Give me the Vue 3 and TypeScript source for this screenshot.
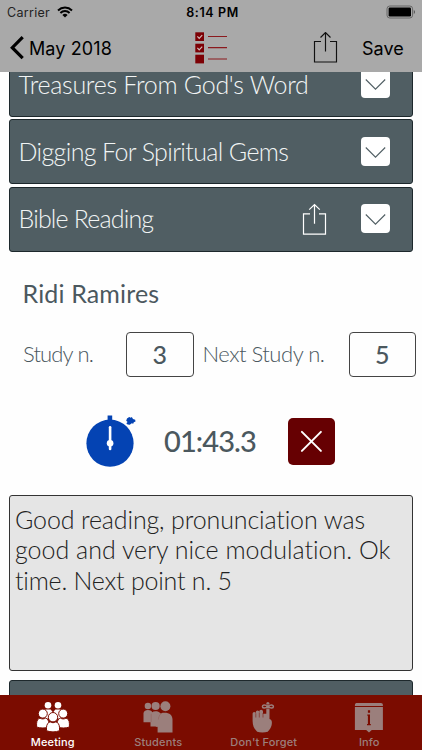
<script setup lang="ts">
interface Section {
  title: string
  cls: string
  share: boolean
}

const sections: Section[] = [
  { title: "Treasures From God's Word", cls: 'treasures', share: false },
  { title: 'Digging For Spiritual Gems', cls: 'gems', share: false },
  { title: 'Bible Reading', cls: 'reading', share: true },
]

const noteLines: string[] = [
  'Good reading, pronunciation was',
  'good and very nice modulation. Ok',
  'time. Next point n. 5',
]
</script>

<template>
  <div class="screen">
    <header class="top">
      <div class="status">
        <div class="carrier">
          <span>Carrier</span>
          <svg class="wifi" width="16" height="12" viewBox="0 0 16 12">
            <path d="M1 4.400a10.200 10.200 0 0 1 14 0M3.400 6.900a6.700 6.700 0 0 1 9.200 0" fill="none" stroke="#000" stroke-width="2" />
            <path d="M5.400 9a3.800 3.800 0 0 1 5.200 0L8 11.600z" />
          </svg>
        </div>
        <span class="clock">8:14 PM</span>
        <svg class="battery" width="30" height="14" viewBox="0 0 30 14">
          <rect x="1" y="1" width="25.600" height="12" rx="2.800" fill="none" stroke="#666" stroke-width="1" />
          <rect x="2.600" y="2.600" width="22.400" height="8.800" rx="1.200" />
          <path d="M27.800 5v4c1.600-.6 1.600-3.400 0-4z" fill="#555" />
        </svg>
      </div>
      <nav class="nav">
        <svg class="back" width="15" height="24" viewBox="0 0 15 24">
          <path d="M12.700 1.200 2.300 11.700l10.400 10.500" fill="none" stroke="#000" stroke-width="3.200" />
        </svg>
        <span class="back-label">May 2018</span>
        <svg class="checklist" width="34" height="33" viewBox="0 0 34 33">
          <g fill="#7d0005">
            <rect x="0.300" y="0.300" width="8.700" height="8.700" />
            <rect x="0.300" y="11.700" width="8.700" height="8.700" />
            <rect x="0.300" y="22.700" width="8.700" height="8.700" />
          </g>
          <path d="m2.400 4.400 1.800 2 3-3.200M2.400 15.800l1.800 2 3-3.200" fill="none" stroke="#d0bcbc" stroke-width="1.200" />
          <path d="M13 4.500h19M13 15.700h19M13 27h19" stroke="#8b1a1e" stroke-width="1.200" />
        </svg>
        <svg class="share" width="25" height="33" viewBox="0 0 25 33">
          <path d="M8 9.500H1.500v20.500h22V9.500H17M12.500 19.500V.7M7.500 5.500l5-5 5 5" fill="none" stroke="#111" stroke-width="1.150" />
        </svg>
        <span class="save">Save</span>
      </nav>
    </header>

    <main class="content">
      <div class="sections">
        <section v-for="s in sections" :key="s.title" class="card">
          <span class="card-title" :class="s.cls">{{ s.title }}</span>
          <svg v-if="s.share" class="card-share" width="25" height="33" viewBox="0 0 25 33">
            <path d="M8 10.900H1.500v20.300h22V10.900H17M12.500 20.700V1.500M7.200 6.600l5.300-5.100 5.300 5.100" fill="none" stroke="#fff" stroke-width="1.200" />
          </svg>
          <span class="toggle">
            <svg width="29" height="29" viewBox="0 0 29 29">
              <path d="m4.800 10.500 9.700 9.700 9.700-9.700" fill="none" stroke="#505e63" stroke-width="1.100" />
            </svg>
          </span>
        </section>
      </div>

      <h2 class="student">Ridi Ramires</h2>

      <div class="study">
        <span class="label current">Study n.</span>
        <span class="box">3</span>
        <span class="label next">Next Study n.</span>
        <span class="box">5</span>
      </div>

      <div class="timer">
        <svg class="stopwatch" width="50" height="53" viewBox="0 0 50 53">
          <g fill="#0443b3">
            <circle cx="24" cy="28.200" r="23.600" />
            <rect x="21.600" y="0.500" width="4.600" height="6" />
            <path d="m41 3.500 2.200-1.600 1.600.8 1-.6 1.200 1.800 2.200.8.300 1.800-1.700.8-.6 1.500-1.500-.5-1.900 1.400-2.200-.3-1.300-1.200 1.300-1.200-1.400-1.200z" />
          </g>
          <path d="M24.100 12.200V34" stroke="#fff" stroke-width="2.600" stroke-linecap="round" />
          <circle cx="24.100" cy="28.200" r="3.300" fill="#fff" />
        </svg>
        <span class="time">01:43.3</span>
        <span class="cancel">
          <svg width="47" height="47" viewBox="0 0 47 47">
            <path d="m13.900 13.900 19 19M32.900 13.900l-19 19" stroke="#fff" stroke-width="2" stroke-linecap="round" />
          </svg>
        </span>
      </div>

      <div class="note">
        <div v-for="(line, i) in noteLines" :key="line" class="line" :class="'line-' + i">{{ line }}</div>
      </div>
      <div class="card next-card"></div>
    </main>

    <footer class="tabs">
      <div class="tab active">
        <svg width="34" height="32" viewBox="0 0 34 32" fill="#fff">
          <circle cx="12" cy="4.300" r="3.300" /><circle cx="22" cy="4.300" r="3.300" />
          <path d="M9.300 8.500h5.400l2.300 3 2.300-3h5.400l.5 9H9z" />
          <g stroke="#7b0c00" stroke-width="1">
            <circle cx="6.800" cy="12.600" r="4.500" />
            <path d="M.6 26v-3.500c0-3 1.700-5 3.400-5.400 1.500 1.100 4 1.100 5.500 0 2 .5 3.400 2.400 3.400 5.400V26c-3 1.300-9 1.300-12.300 0z" />
            <circle cx="27.200" cy="12.600" r="4.500" />
            <path d="M21.100 26v-3.500c0-3 1.700-5 3.400-5.400 1.500 1.100 4 1.100 5.500 0 2 .5 3.400 2.400 3.400 5.400V26c-3 1.300-9 1.300-12.300 0z" />
            <circle cx="17" cy="16.200" r="4.700" />
            <path d="M10.500 29.700v-3.200c0-3 1.800-5.200 3.600-5.700 1.700 1.200 4.100 1.200 5.800 0 1.800.5 3.600 2.700 3.600 5.700v3.200c-3.500 1.600-9.500 1.600-13 0z" />
          </g>
        </svg>
        <span>Meeting</span>
      </div>
      <div class="tab students">
        <svg width="34" height="32" viewBox="0 0 34 32" fill="#9b7f7c">
          <circle cx="6.900" cy="5" r="3.200" />
          <path d="M2.500 21.300V12.500C2.500 10.200 4.300 9 6.900 9s4 1 4.500 2.500v9.800z" />
          <circle cx="14.600" cy="5" r="4.100" />
          <path d="M9.500 25.500V14.800c0-3 2-4.600 5.100-4.600s5.600 2 5.600 4.600v10.700z" />
          <circle cx="24.400" cy="5.200" r="5" />
          <path d="M16.600 31.500v-5.700h-1.800V18.200c0-4 3.800-6.400 8.700-6.400 5.200 0 8 2.700 8 6.700v13z" />
          <path d="M10.200 21V12.800M17.400 18.500c.3-3.500 1.700-5.600 3.800-6.700" fill="none" stroke="#7b0c00" stroke-opacity=".3" stroke-width=".5" />
        </svg>
        <span>Students</span>
      </div>
      <div class="tab forget">
        <svg width="34" height="32" viewBox="0 0 34 32">
          <path d="M5.600 20v-7.400a1.600 1.600 0 0 1 3.200 0v-1.400a1.750 1.750 0 0 1 3.500 0v-.7a1.850 1.850 0 0 1 3.700 0v2.200h3.300V2.600a1.600 1.600 0 0 1 3.200 0V18c1.700.5 2.400 1.700 2.400 3.500 0 5-2.500 7.300-4.200 9.200-3 1-7.700 1-10.500 0-2.400-2.200-4.600-5.200-4.600-10.700z" fill="#9b7f7c" />
          <path d="M8.800 12.300v4.200M12.300 11.500v5M16 12v4.500" stroke="#7b0c00" stroke-width=".5" />
          <path d="M20.900 5.500c-3-2.500-5.500-1.800-5.500 0s2.500 2.500 5.500 0c3-2.500 5.500-1.800 5.500 0s-2.500 2.500-5.500 0z" fill="none" stroke="#9b7f7c" stroke-width="1.500" />
          <path d="M19.200 7.600h3.400M19.200 3.700h3.400" stroke="#7b0c00" stroke-width=".5" />
        </svg>
        <span>Don't Forget</span>
      </div>
      <div class="tab info">
        <svg width="34" height="32" viewBox="0 0 34 32">
          <path d="M2.900 4.200C2.900 2.600 3.600 2 5.300 2h23.600c1.400 0 2 .7 2 2.200v.7h-28zM2.900 6h28v23H19.800L17 31.600 14.200 29H2.900z" fill="#9b7f7c" />
          <path d="M15.900 9.300h2.200v2.400h-2.200zM15.300 13.600h2.700v9.400h.8v1.200h-3.800V23h.9v-8.300h-.6z" fill="#7b0c00" />
        </svg>
        <span>Info</span>
      </div>
    </footer>
  </div>
</template>

<style>
body {
  background: #fff;
  overflow: hidden;
}
</style>

<style scoped>
.screen {
  width: 422px;
  height: 750px;
  display: flex;
  flex-direction: column;
  overflow: hidden;
  background: #fefefe;
  font-family: Lato, "Gill Sans", sans-serif;
  font-variant-ligatures: none;
  white-space: nowrap;
}
svg {
  display: block;
  flex: none;
}
.top {
  height: 72px;
  flex: none;
  background: #a9a9a9;
  font-family: Inter, "Liberation Sans", sans-serif;
  color: #000;
}
.status {
  height: 24px;
  display: grid;
  grid-template-columns: 1fr auto 1fr;
  align-items: center;
  font-size: 12.500px;
  padding: 0 6px 0 7px;
}
.carrier {
  display: flex;
  align-items: center;
  gap: 7px;
  color: #222;
  letter-spacing: 0.300px;
}
.clock {
  font-weight: 600;
  letter-spacing: 0.600px;
  padding-left: 2px;
}
.battery {
  justify-self: end;
}
.nav {
  height: 48px;
  display: flex;
  align-items: center;
  padding-left: 10px;
  font-size: 18px;
}
.back-label {
  margin-left: 4px;
  width: 85px;
  letter-spacing: 0.100px;
}
.checklist {
  margin-left: 81px;
}
.share {
  margin-left: 84px;
}
.save {
  margin-left: 24px;
}
.content {
  flex: 1;
  min-height: 0;
  overflow: hidden;
  padding: 0 9px;
  color: #4b585e;
}
.sections {
  margin-top: -20px;
  display: flex;
  flex-direction: column;
  gap: 2.330px;
}
.card {
  box-sizing: border-box;
  height: 65px;
  width: 404px;
  display: flex;
  align-items: center;
  padding: 0 22.500px 0 8.500px;
  border: 1px solid #1d282c;
  border-radius: 3px;
  background: #505e63;
}
.card-title {
  flex: 1;
  color: #f2f5f5;
  font-size: 25px;
  font-weight: 300;
  line-height: 20px;
  padding-bottom: 2px;
}
.treasures {
  letter-spacing: -0.290px;
}
.gems {
  letter-spacing: -0.630px;
}
.reading {
  letter-spacing: -0.830px;
}
.card-share {
  margin-right: 34px;
}
.toggle {
  width: 29px;
  height: 29px;
  margin-bottom: 1.500px;
  border-radius: 4px;
  background: #fff;
}
.student {
  margin: 24px 0 0 13.500px;
  font-size: 25px;
  line-height: 34px;
  font-weight: 400;
  letter-spacing: 0.150px;
}
.study {
  margin: 22px -4px 0 0;
  height: 45px;
  display: flex;
  align-items: center;
  padding-left: 14px;
}
.label {
  font-size: 22px;
  font-weight: 300;
  line-height: 26px;
  padding-bottom: 1px;
}
.current {
  width: 103px;
  letter-spacing: -0.850px;
}
.next {
  margin-left: 9px;
  width: 146px;
  letter-spacing: -0.480px;
}
.box {
  box-sizing: border-box;
  width: 67.500px;
  height: 45px;
  flex: none;
  border: 1px solid #444;
  border-radius: 4px;
  font-size: 25px;
  font-weight: 500;
  line-height: 43px;
  text-align: center;
}
.timer {
  margin-top: 38px;
  height: 53px;
  display: flex;
  align-items: center;
  padding-left: 77px;
}
.time {
  margin-left: 28px;
  width: 96px;
  font-size: 29px;
  font-weight: 500;
  line-height: 34px;
  padding-bottom: 1px;
  letter-spacing: -0.900px;
}
.cancel {
  margin: 0 0 0 28px;
  width: 47px;
  height: 47px;
  border-radius: 5px;
  background: #660002;
}
.note {
  box-sizing: border-box;
  width: 404px;
  height: 176px;
  margin-top: 27px;
  padding: 8px 5px;
  border: 1px solid #333;
  border-radius: 3px;
  background: #e5e5e5;
  color: #222;
  font-size: 25px;
  font-weight: 300;
  line-height: 30.500px;
}
.line-0 {
  letter-spacing: -0.140px;
}
.line-1 {
  letter-spacing: 0;
}
.line-2 {
  letter-spacing: -0.220px;
}
.next-card {
  margin-top: 9px;
}
.tabs {
  height: 55.500px;
  flex: none;
  display: grid;
  grid-template-columns: repeat(4, 105.500px);
  background: #7b0c00;
}
.tab {
  display: flex;
  flex-direction: column;
  align-items: center;
  padding-top: 6px;
  color: #9b7f7c;
  font-family: Inter, "Liberation Sans", sans-serif;
  font-size: 11px;
  font-weight: 500;
  line-height: 14px;
  gap: 2px;
  letter-spacing: 0.150px;
}
.active {
  color: #fff;
}
</style>
